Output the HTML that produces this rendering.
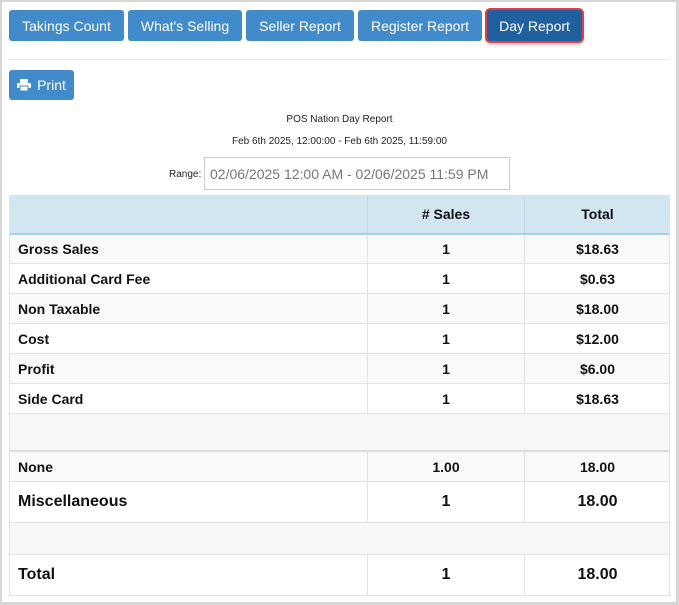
<!DOCTYPE html>
<html><head><style>
*{box-sizing:border-box;margin:0;padding:0}
body{width:679px;height:605px;background:#fff;font-family:"Liberation Sans",Arial,sans-serif;position:relative;overflow:hidden}
.frame{position:absolute;left:0;top:0;width:679px;height:605px;border:2px solid #d6d6d6;border-right-width:3px;border-bottom-width:3px}
.btn{position:absolute;top:10px;height:31px;background:#428bca;color:#fff;font-size:14px;border-radius:3px;display:flex;align-items:center;justify-content:center}
.a{position:absolute}
.c{position:absolute;text-align:center;font-size:13px;color:#111}
.row{position:absolute;left:9px;width:661px;border-top:1px solid #e2e2e2}
.cell{position:absolute;top:0;height:100%;display:flex;align-items:center;font-weight:bold;color:#111;font-size:14px}
.l{left:0;width:359px;padding-left:9px;border-right:1px solid #e2e2e2}
.m{left:359px;width:157px;justify-content:center;border-right:1px solid #e2e2e2}
.r{left:516px;width:145px;justify-content:center}
.big{font-size:16px}
</style></head><body>
<div class="frame"></div>
<div class="btn" style="left:9px;width:115px">Takings Count</div>
<div class="btn" style="left:128px;width:114px">What's Selling</div>
<div class="btn" style="left:246px;width:108px">Seller Report</div>
<div class="btn" style="left:358px;width:124px">Register Report</div>
<div class="btn" style="left:487px;width:95px;background:#21609e;box-shadow:0 0 0 2px #e0404a,0 3px 5px rgba(0,0,0,.35)">Day Report</div>
<div class="a" style="left:8px;top:59px;width:661px;height:1px;background:#e6e6e6"></div>
<div class="btn" style="left:9px;top:70px;width:65px;height:30px;font-size:14px">
<svg width="14" height="12" viewBox="0 0 14 12" style="margin-right:6px"><rect x="3" y="0" width="8" height="4" fill="#fff"/><rect x="0" y="4" width="14" height="5" rx="1" fill="#fff"/><rect x="3" y="7" width="8" height="5" fill="#fff" stroke="#428bca" stroke-width="1"/></svg>Print</div>
<div class="c" style="left:0;width:679px;top:114px;font-size:10px;color:#222">POS Nation Day Report</div>
<div class="c" style="left:0;width:679px;top:136px;font-size:10px;color:#222">Feb 6th 2025, 12:00:00 - Feb 6th 2025, 11:59:00</div>
<div class="a" style="left:169px;top:169px;font-size:10px;color:#222">Range:</div>
<div class="a" style="left:204px;top:157px;width:306px;height:33px;border:1px solid #ccc;font-size:14px;color:#777;padding:8px 0 0 5px">02/06/2025 12:00 AM - 02/06/2025 11:59 PM</div>
<div class="row" style="top:195px;height:40px;background:#d2e6f2;border-top:none;border-bottom:2px solid #aad0e8"><div class="cell l" style="border-color:#bcd9ea"></div><div class="cell m" style="border-color:#bcd9ea">#&nbsp;Sales</div><div class="cell r">Total</div></div>
<div class="row" style="top:235px;height:28px;background:#f9f9f9;border-top:none"><div class="cell l">Gross Sales</div><div class="cell m">1</div><div class="cell r">$18.63</div></div>
<div class="row" style="top:263px;height:30px"><div class="cell l">Additional Card Fee</div><div class="cell m">1</div><div class="cell r">$0.63</div></div>
<div class="row" style="top:293px;height:30px;background:#f9f9f9"><div class="cell l">Non Taxable</div><div class="cell m">1</div><div class="cell r">$18.00</div></div>
<div class="row" style="top:323px;height:30px"><div class="cell l">Cost</div><div class="cell m">1</div><div class="cell r">$12.00</div></div>
<div class="row" style="top:353px;height:30px;background:#f9f9f9"><div class="cell l">Profit</div><div class="cell m">1</div><div class="cell r">$6.00</div></div>
<div class="row" style="top:383px;height:30px"><div class="cell l">Side Card</div><div class="cell m">1</div><div class="cell r">$18.63</div></div>
<div class="row" style="top:413px;height:38px;background:#f7f7f7"></div>
<div class="row" style="top:450px;height:31px;background:#f9f9f9;border-top:2px solid #ddd"><div class="cell l">None</div><div class="cell m">1.00</div><div class="cell r">18.00</div></div>
<div class="row" style="top:481px;height:41px"><div class="cell l big">Miscellaneous</div><div class="cell m big">1</div><div class="cell r big">18.00</div></div>
<div class="row" style="top:522px;height:32px;background:#f7f7f7"></div>
<div class="row" style="top:554px;height:42px;border-bottom:1px solid #e2e2e2"><div class="cell l big">Total</div><div class="cell m big">1</div><div class="cell r big">18.00</div></div>
<div class="a" style="left:9px;top:195px;width:1px;height:401px;background:#e2e2e2"></div>
<div class="a" style="left:669px;top:195px;width:1px;height:401px;background:#e2e2e2"></div>
</body></html>
